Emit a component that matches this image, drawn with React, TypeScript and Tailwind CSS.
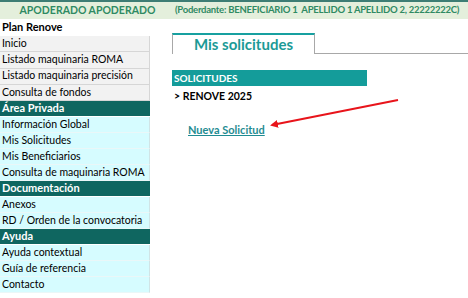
const groups: { title?: string; items: string[]; tone: "gray" | "cyan" }[] = [
  { items: ["Inicio", "Listado maquinaria ROMA", "Listado maquinaria precisión", "Consulta de fondos"], tone: "gray" },
  { title: "Área Privada", items: ["Información Global", "Mis Solicitudes", "Mis Beneficiarios", "Consulta de maquinaria ROMA"], tone: "cyan" },
  { title: "Documentación", items: ["Anexos", "RD / Orden de la convocatoria"], tone: "cyan" },
  { title: "Ayuda", items: ["Ayuda contextual", "Guía de referencia", "Contacto"], tone: "cyan" },
];

export default function App() {
  return (
    <div className="relative w-[468px] h-[298px] overflow-hidden bg-white font-['Lato',sans-serif] text-[10.5px] text-black whitespace-nowrap">
      <div className="h-[19px] flex items-center border-t-2 border-[#3d7d74] bg-[#e4efdc] font-bold text-[#2f8a63]">
        <div className="w-[175px] text-center text-[10.5px]">APODERADO APODERADO</div>
        <div className="text-[9.5px] tracking-[-0.25px]">(Poderdante: BENEFICIARIO 1&nbsp; APELLIDO 1 APELLIDO 2, 22222222C)</div>
      </div>

      <div className="flex">
        <nav className="w-[150px] flex flex-col">
          <div className="h-[17px] flex items-center px-[2px] font-bold text-black text-[11px]">Plan Renove</div>
          {groups.map((g, i) => (
            <div key={i} className="flex flex-col">
              {g.title && (
                <div className="h-[16px] flex items-center px-[2px] bg-[#0f6660] text-white font-bold border-b border-white text-[11px]">
                  {g.title}
                </div>
              )}
              {g.items.map((item) => (
                <div
                  key={item}
                  className={
                    g.tone === "gray"
                      ? "h-[16.25px] flex items-center px-[2px] bg-[#f2f2f2] border-b border-[#d6d6d6] border-r border-r-[#d6d6d6]"
                      : "h-[16px] flex items-center px-[2px] bg-[#d6fcff] border-b border-[#eaf7f8] border-r border-r-[#d0e4e6]"
                  }
                >
                  {item}
                </div>
              ))}
            </div>
          ))}
        </nav>

        <main className="flex-1 pt-[14px]">
          <div className="flex items-end">
            <div className="ml-[22px] w-[143px] h-[21px] flex items-center justify-center border-t-2 border-t-[#17a0a0] border-x border-x-[#a8a8a8] text-[15px] font-bold text-[#1b9a96]">
              Mis solicitudes
            </div>
            <div className="flex-1 border-b border-[#a8a8a8]" />
          </div>

          <div className="ml-[22px] mt-[16px] w-[195px] h-[16px] flex items-center px-[2px] bg-[#149c9a] text-white font-bold text-[10px]">
            SOLICITUDES
          </div>
          <div className="ml-[24px] mt-[3px] font-bold text-[10.5px] text-black">&gt; RENOVE 2025</div>
          <a className="block ml-[38px] mt-[17px] font-bold text-[11px] text-[#1f8c92] underline">Nueva Solicitud</a>
        </main>
      </div>

      <svg className="absolute left-0 top-0" width="468" height="298">
        <defs>
          <marker id="ah" markerWidth="8" markerHeight="8" refX="6" refY="4" orient="auto" markerUnits="userSpaceOnUse">
            <path d="M0,0 L8,4 L0,8 z" fill="#e8141b" />
          </marker>
        </defs>
        <line x1="398" y1="100" x2="272" y2="125" stroke="#e8141b" strokeWidth="2" markerEnd="url(#ah)" />
      </svg>
    </div>
  );
}
